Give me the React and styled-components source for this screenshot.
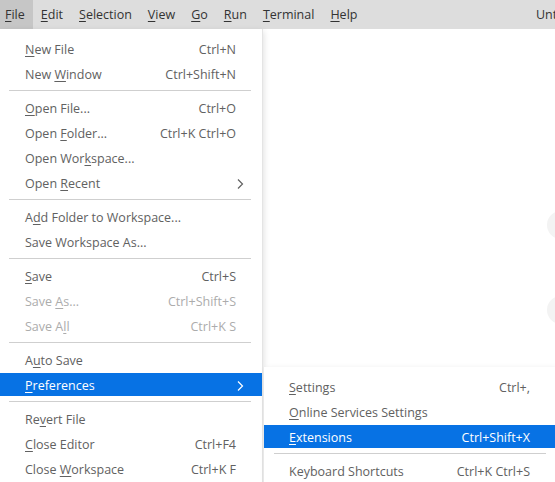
import React from "react";
import styled, { createGlobalStyle } from "styled-components";

const GlobalStyle = createGlobalStyle`
  html, body {
    margin: 0;
    padding: 0;
    background: #ffffff;
  }
  body {
    font-family: "Open Sans", "Noto Sans", sans-serif;
    font-size: 12.5px;
    overflow: hidden;
  }
  u {
    text-underline-offset: 2px;
  }
`;

const Window = styled.div`
  position: relative;
  width: 555px;
  height: 482px;
  overflow: hidden;
  background: #ffffff;
`;

const MenuBar = styled.div`
  display: flex;
  align-items: stretch;
  height: 29px;
  background: #dddddd;
  color: #333333;
  white-space: nowrap;
  overflow: hidden;
`;

const BarItem = styled.div`
  display: flex;
  align-items: center;
  padding: 0 8px;
  background: ${(p) => (p.$open ? "#c6c6c6" : "transparent")};

  &:first-child {
    padding-left: 5px;
  }
`;

const Title = styled.div`
  display: flex;
  align-items: center;
  margin-left: auto;
  width: 19px;
  flex-shrink: 0;
  overflow: hidden;
  color: #333333;
`;

const Editor = styled.div`
  position: relative;
  height: calc(100% - 29px);
`;

const Mark = styled.div`
  position: absolute;
  right: -20px;
  top: ${(p) => p.$top}px;
  width: 28px;
  height: 28px;
  border-radius: 50%;
  background: #f3f3f3;
`;

const Menu = styled.div`
  position: absolute;
  left: ${(p) => p.$left}px;
  top: ${(p) => p.$top}px;
  width: ${(p) => p.$width}px;
  padding: 7px 0;
  background: #ffffff;
  color: #616161;
  box-shadow: 1px 0 0 #e4e4e4, 2px 2px 6px rgba(0, 0, 0, 0.12);
  z-index: ${(p) => p.$z || 1};
`;

const Row = styled.div`
  height: 25px;
  display: flex;
  align-items: stretch;
`;

const Inner = styled.div`
  flex: 1;
  margin: 1px 0;
  display: flex;
  align-items: center;
  padding: 2px 26px 0 25px;
  background: ${(p) => (p.$active ? "#0772e4" : "transparent")};
  color: ${(p) => (p.$active ? "#ffffff" : p.$disabled ? "#acacac" : "inherit")};
  white-space: nowrap;
`;

const Label = styled.span`
  flex: 1;
`;

const Keys = styled.span`
  margin-left: 20px;
`;

const Arrow = styled.svg`
  width: 8px;
  height: 12px;
  margin-right: -8px;
  fill: none;
  stroke: currentColor;
  stroke-width: 1.2;
`;

const Sep = styled.div`
  height: 9px;
  display: flex;
  align-items: center;
  padding: 0 ${(p) => p.$right}px 0 ${(p) => p.$left}px;

  &::after {
    content: "";
    flex: 1;
    height: 1px;
    background: #cfcfcf;
  }
`;

const bar = [
  ["F", "ile"],
  ["E", "dit"],
  ["S", "election"],
  ["V", "iew"],
  ["G", "o"],
  ["R", "un"],
  ["T", "erminal"],
  ["H", "elp"],
];

const fileMenu = [
  { pre: "", u: "N", post: "ew File", keys: "Ctrl+N" },
  { pre: "New ", u: "W", post: "indow", keys: "Ctrl+Shift+N" },
  "sep",
  { pre: "", u: "O", post: "pen File...", keys: "Ctrl+O" },
  { pre: "Open ", u: "F", post: "older...", keys: "Ctrl+K Ctrl+O" },
  { pre: "Open Wor", u: "k", post: "space..." },
  { pre: "Open ", u: "R", post: "ecent", sub: true },
  "sep",
  { pre: "A", u: "d", post: "d Folder to Workspace..." },
  { pre: "Save Workspace As...", u: "", post: "" },
  "sep",
  { pre: "", u: "S", post: "ave", keys: "Ctrl+S" },
  { pre: "Save ", u: "A", post: "s...", keys: "Ctrl+Shift+S", disabled: true },
  { pre: "Save A", u: "l", post: "l", keys: "Ctrl+K S", disabled: true },
  "sep",
  { pre: "A", u: "u", post: "to Save" },
  { pre: "", u: "P", post: "references", sub: true, active: true },
  "sep",
  { pre: "Re", u: "v", post: "ert File" },
  { pre: "", u: "C", post: "lose Editor", keys: "Ctrl+F4" },
  { pre: "Close ", u: "W", post: "orkspace", keys: "Ctrl+K F" },
];

const prefMenu = [
  { pre: "", u: "S", post: "ettings", keys: "Ctrl+," },
  { pre: "", u: "O", post: "nline Services Settings" },
  { pre: "", u: "E", post: "xtensions", keys: "Ctrl+Shift+X", active: true },
  "sep",
  { pre: "Keyboard Shortcuts", u: "", post: "", keys: "Ctrl+K Ctrl+S" },
];

const MenuItems = ({ items, sepLeft, sepRight }) =>
  items.map((it, i) =>
    it === "sep" ? (
      <Sep key={i} $left={sepLeft} $right={sepRight} />
    ) : (
      <Row key={i}>
        <Inner $active={it.active} $disabled={it.disabled}>
          <Label>
            {it.pre}
            {it.u && <u>{it.u}</u>}
            {it.post}
          </Label>
          {it.keys && <Keys>{it.keys}</Keys>}
          {it.sub && (
            <Arrow viewBox="0 0 8 12">
              <path d="M2 1.5 L6.5 6 L2 10.5" />
            </Arrow>
          )}
        </Inner>
      </Row>
    )
  );

export default function App() {
  return (
    <Window>
      <GlobalStyle />
      <MenuBar>
        {bar.map(([u, rest], i) => (
          <BarItem key={i} $open={i === 0}>
            <span>
              <u>{u}</u>
              {rest}
            </span>
          </BarItem>
        ))}
        <Title>Untitled (Workspace) - Visual Studio Code</Title>
      </MenuBar>
      <Editor>
        <Mark $top={182} />
        <Mark $top={267} />
      </Editor>
      <Menu $left={0} $top={29} $width={262} $z={1}>
        <MenuItems items={fileMenu} sepLeft={9} sepRight={11} />
      </Menu>
      <Menu $left={264} $top={367} $width={292} $z={2}>
        <MenuItems items={prefMenu} sepLeft={10} sepRight={10} />
      </Menu>
    </Window>
  );
}
